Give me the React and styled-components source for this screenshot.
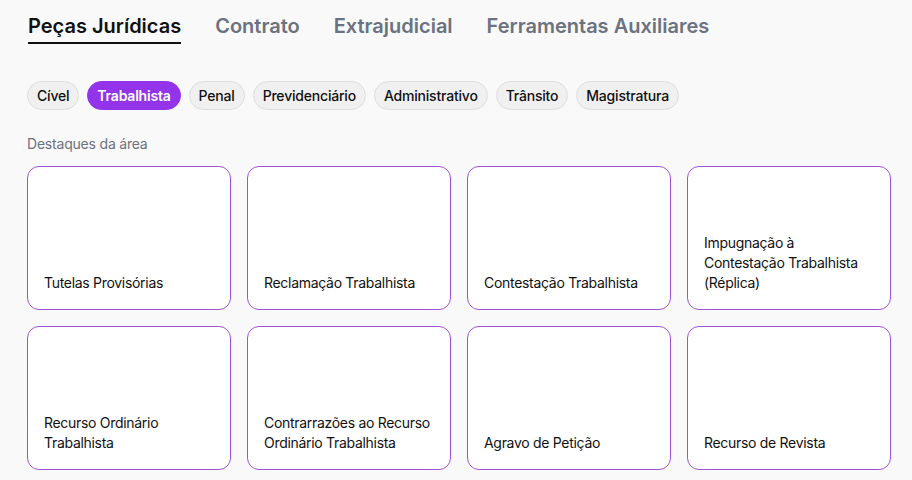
import styled, { createGlobalStyle } from 'styled-components';

const Global = createGlobalStyle`
    body {
        margin: 0;
        background: #f9f9f9;
        font-family: Inter, 'Noto Sans', sans-serif;
        color: #111;
    }
`;

const Page = styled.div`
    padding: 12px 21px 0 27px;
`;
const Tabs = styled.div`
    display: flex;
    gap: 34px;
    padding-left: 1px;
`;
const Tab = styled.div`
    font-size: 20px;
    font-weight: 600;
    line-height: 29px;
    padding-bottom: 1px;
    color: ${(p) => (p.$active ? '#111' : '#6b7280')};
    border-bottom: 2px solid ${(p) => (p.$active ? '#111' : 'transparent')};
`;
const Pills = styled.div`
    display: flex;
    gap: 8px;
    margin-top: 37px;
`;
const Pill = styled.div`
    height: 29px;
    box-sizing: border-box;
    display: flex;
    align-items: center;
    padding: 0 9px;
    border-radius: 15px;
    font-size: 14px;
    letter-spacing: -0.2px;
    font-weight: ${(p) => (p.$active ? 600 : 500)};
    background: ${(p) => (p.$active ? '#9333ea' : '#f0f0f1')};
    color: ${(p) => (p.$active ? '#fff' : '#111')};
    border: 1px solid ${(p) => (p.$active ? '#9333ea' : '#dedede')};
`;
const Label = styled.div`
    margin-top: 24px;
    font-size: 14px;
    letter-spacing: -0.2px;
    color: #6b7280;
    line-height: 20px;
`;
const Grid = styled.div`
    display: grid;
    grid-template-columns: repeat(4, 204px);
    grid-auto-rows: 144px;
    gap: 16px;
    margin-top: 12px;
`;
const Card = styled.div`
    box-sizing: border-box;
    background: #fff;
    border: 1px solid #a251d6;
    border-radius: 12px;
    padding: 16px;
    display: flex;
    align-items: flex-end;
    font-size: 14px;
    letter-spacing: -0.3px;
    line-height: 20px;
    font-weight: 400;
    color: #111;
`;

const tabs = ['Peças Jurídicas', 'Contrato', 'Extrajudicial', 'Ferramentas Auxiliares'];
const areas = ['Cível', 'Trabalhista', 'Penal', 'Previdenciário', 'Administrativo', 'Trânsito', 'Magistratura'];
const cards = [
    'Tutelas Provisórias',
    'Reclamação Trabalhista',
    'Contestação Trabalhista',
    'Impugnação à Contestação Trabalhista (Réplica)',
    'Recurso Ordinário Trabalhista',
    'Contrarrazões ao Recurso Ordinário Trabalhista',
    'Agravo de Petição',
    'Recurso de Revista',
];

export default function App() {
    return (
        <Page>
            <Global />
            <Tabs>
                {tabs.map((t, i) => (
                    <Tab key={t} $active={i === 0}>{t}</Tab>
                ))}
            </Tabs>
            <Pills>
                {areas.map((a) => (
                    <Pill key={a} $active={a === 'Trabalhista'}>{a}</Pill>
                ))}
            </Pills>
            <Label>Destaques da área</Label>
            <Grid>
                {cards.map((c) => (
                    <Card key={c}>{c}</Card>
                ))}
            </Grid>
        </Page>
    );
}
